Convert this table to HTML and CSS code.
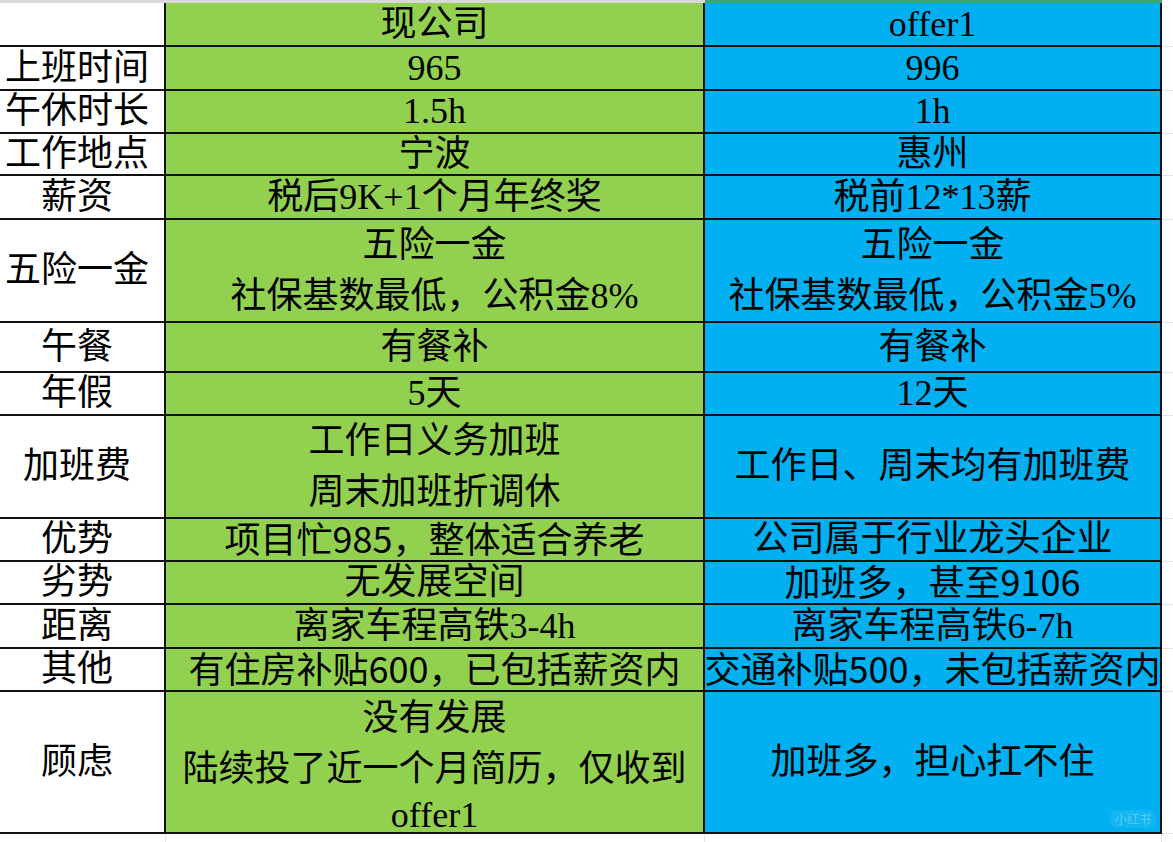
FILE: index.html
```html
<!DOCTYPE html>
<html lang="zh-CN">
<head>
<meta charset="utf-8">
<title>offer 对比</title>
<link rel="stylesheet" href="styles.css">
</head>
<body>
<div class="sheet">
  <div class="strip strip-gray"></div>
  <div class="strip strip-gray"></div>
  <div class="strip strip-green"></div>
  <div class="strip"></div>

  <div class="c lab"></div>
  <div class="c g">现公司</div>
  <div class="c b">offer1</div>
  <div class="pad"></div>

  <div class="c lab">上班时间</div>
  <div class="c g">965</div>
  <div class="c b">996</div>
  <div class="pad"></div>

  <div class="c lab">午休时长</div>
  <div class="c g">1.5h</div>
  <div class="c b">1h</div>
  <div class="pad"></div>

  <div class="c lab">工作地点</div>
  <div class="c g">宁波</div>
  <div class="c b">惠州</div>
  <div class="pad"></div>

  <div class="c lab">薪资</div>
  <div class="c g">税后9K+1个月年终奖</div>
  <div class="c b">税前12*13薪</div>
  <div class="pad"></div>

  <div class="c lab">五险一金</div>
  <div class="c g"><span>五险一金</span><span>社保基数最低，公积金8%</span></div>
  <div class="c b"><span>五险一金</span><span>社保基数最低，公积金5%</span></div>
  <div class="pad"></div>

  <div class="c lab">午餐</div>
  <div class="c g">有餐补</div>
  <div class="c b">有餐补</div>
  <div class="pad"></div>

  <div class="c lab">年假</div>
  <div class="c g">5天</div>
  <div class="c b">12天</div>
  <div class="pad"></div>

  <div class="c lab">加班费</div>
  <div class="c g"><span>工作日义务加班</span><span>周末加班折调休</span></div>
  <div class="c b">工作日、周末均有加班费</div>
  <div class="pad"></div>

  <div class="c lab">优势</div>
  <div class="c g"><span>项目忙<span class="sans">985</span>，整体适合养老</span></div>
  <div class="c b">公司属于行业龙头企业</div>
  <div class="pad"></div>

  <div class="c lab">劣势</div>
  <div class="c g">无发展空间</div>
  <div class="c b"><span>加班多，甚至<span class="sans">9106</span></span></div>
  <div class="pad"></div>

  <div class="c lab">距离</div>
  <div class="c g">离家车程高铁3-4h</div>
  <div class="c b">离家车程高铁6-7h</div>
  <div class="pad"></div>

  <div class="c lab">其他</div>
  <div class="c g"><span>有住房补贴<span class="sans">600</span>，已包括薪资内</span></div>
  <div class="c b"><span>交通补贴<span class="sans">500</span>，未包括薪资内</span></div>
  <div class="pad"></div>

  <div class="c lab">顾虑</div>
  <div class="c g tall"><span>没有发展</span><span>陆续投了近一个月简历，仅收到</span><span class="latin-line">offer1</span></div>
  <div class="c b last">加班多，担心扛不住<span class="mark">小红书</span></div>
  <div class="pad"></div>

  <div class="foot"></div>
  <div class="foot"></div>
  <div class="foot"></div>
  <div class="foot foot-end"></div>
</div>
</body>
</html>
```

FILE: styles.css
```css
* {
  box-sizing: border-box;
}

html, body {
  margin: 0;
  padding: 0;
  background: #ffffff;
}

.sheet {
  width: 1173px;
  height: 842px;
  display: grid;
  grid-template-columns: 166px 539px 457px 1fr;
  grid-template-rows: 3px 44px 44px 43px 42px 44px 103px 50px 43px 103px 43px 43px 44px 43px 142px 1fr;
  font-family: "Liberation Serif", "Noto Sans CJK SC", serif;
  font-size: 36px;
  color: #000000;
  overflow: hidden;
}

.strip {
  background: #ffffff;
}

.strip-gray {
  background: #d9d9d9;
}

.strip-green {
  background: #3aa86a;
}

.c {
  display: flex;
  flex-direction: column;
  justify-content: center;
  align-items: center;
  text-align: center;
  line-height: 51px;
  white-space: nowrap;
  border-bottom: 2px solid #111111;
  border-right: 2px solid #111111;
  min-height: 0;
}

.sans {
  font-family: "Noto Sans CJK SC", sans-serif;
}

.lab {
  background: #ffffff;
  padding-right: 10px;
}

.g {
  background: #92d050;
}

.b {
  background: #00b0f0;
}

.tall {
  padding-top: 9px;
}

.latin-line {
  margin-top: -5px;
}

.last {
  position: relative;
}

.mark {
  position: absolute;
  right: 4px;
  bottom: 4px;
  font-family: "Noto Sans CJK SC", sans-serif;
  font-size: 12px;
  line-height: 18px;
  padding: 0 5px;
  border-radius: 7px;
  color: rgba(255, 255, 255, 0.3);
  background: rgba(255, 255, 255, 0.08);
}

.pad {
  background: #ffffff;
  border-bottom: 1px solid #e3e3e3;
}

.foot {
  background: #ffffff;
  border-right: 1px solid #e3e3e3;
}

.foot-end {
  border-right: none;
}
```
